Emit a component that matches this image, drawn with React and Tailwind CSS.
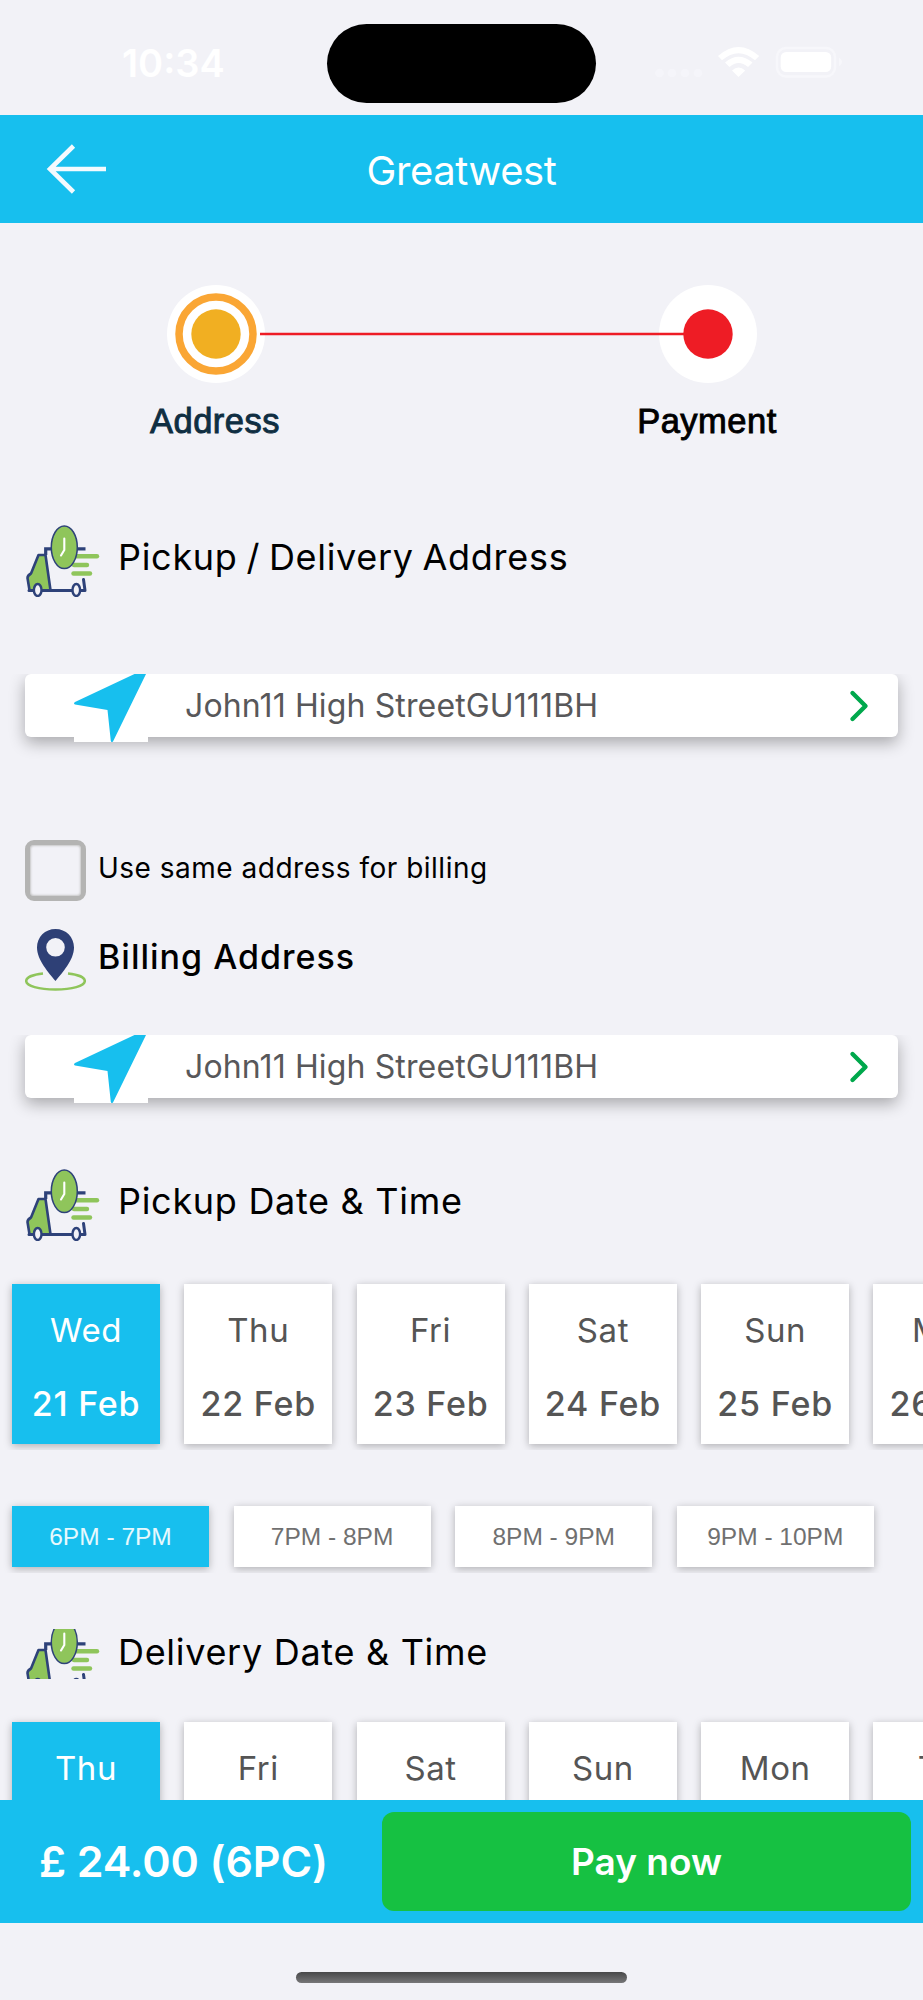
const pickupDays = [
  { day: 'Wed', date: '21 Feb' },
  { day: 'Thu', date: '22 Feb' },
  { day: 'Fri', date: '23 Feb' },
  { day: 'Sat', date: '24 Feb' },
  { day: 'Sun', date: '25 Feb' },
  { day: 'Mon', date: '26 Feb' },
];

const deliveryDays = [
  { day: 'Thu' },
  { day: 'Fri' },
  { day: 'Sat' },
  { day: 'Sun' },
  { day: 'Mon' },
  { day: 'Tue' },
];

const slots = ['6PM - 7PM', '7PM - 8PM', '8PM - 9PM', '9PM - 10PM'];

const TruckIcon = ({ cropped }) => (
  <svg
    className={cropped ? 'w-[74px] h-[50px] shrink-0' : 'w-[74px] h-[72px] shrink-0'}
    viewBox={cropped ? '0 9 74 50' : '0 0 74 72'}
    fill="none"
  >
    <g stroke="#8fc55b" strokeWidth="4.4" strokeLinecap="round">
      <path d="M50 31.300H71" />
      <path d="M48 40H61" />
      <path d="M47.500 48.500H64" />
    </g>
    <path d="M27 23.800H19.700V30M51 23.800H59.500" stroke="#2e4279" strokeWidth="3.200" />
    <path d="M12.500 30h7L24.500 65.300H3.500L1.500 53q0-2.500 3.500-4.500Z" fill="#8fc55b" stroke="#2e4279" strokeWidth="2.600" strokeLinejoin="round" />
    <path d="M3 65.500H59L57.500 54.500" stroke="#2e4279" strokeWidth="3" strokeLinejoin="round" strokeLinecap="round" />
    <ellipse cx="11.700" cy="65" rx="3.800" ry="6" fill="#f2f2f7" stroke="#2e4279" strokeWidth="2.400" />
    <ellipse cx="50.300" cy="65" rx="3.800" ry="6" fill="#f2f2f7" stroke="#2e4279" strokeWidth="2.400" />
    <ellipse cx="38.300" cy="22.300" rx="13" ry="21.300" fill="#8fc55b" stroke="#2e4279" strokeWidth="1.500" />
    <path d="M38.300 13.500V25L35 30.500" stroke="#fff" strokeWidth="2.100" strokeLinecap="round" />
  </svg>
);

const PinIcon = () => (
  <svg className="w-[61px] h-[62px]" viewBox="0 0 61 62" fill="none">
    <path
      fillRule="evenodd"
      d="M30.500 0C20 0 12 8 12 18.500C12 31 24 44 30.500 52C37 44 49 31 49 18.500C49 8 41 0 30.500 0ZM30.500 9A9.300 9.300 0 1 1 30.500 27.600A9.300 9.300 0 1 1 30.500 9Z"
      fill="#2e4076"
    />
    <path d="M18 44.500C8 45.500 1.200 48.500 1.200 52C1.200 57 14 60.500 30.500 60.500S59.800 57 59.800 52C59.800 48.500 53 45.500 43 44.500" stroke="#8fc55b" strokeWidth="2.500" />
  </svg>
);

const Heading = ({ cropped, children, className = '' }) => (
  <div className={`flex items-center pl-[26px] ${cropped ? 'h-[50px]' : 'h-[72px]'}`}>
    <TruckIcon cropped={cropped} />
    <h2 className={`pl-[18px] text-[36px] leading-none tracking-[0.7px] text-black whitespace-nowrap ${cropped ? 'pb-[5px]' : 'pb-[8px]'} ${className}`}>
      {children}
    </h2>
  </div>
);

const AddressCard = () => (
  <div className="mx-[25px] h-[63px] bg-white rounded-md flex items-center shadow-[0_6px_16px_rgba(0,0,0,0.3)] [clip-path:inset(0_-24px_-30px_-24px)]">
    <svg className="ml-[49px] w-[74px] h-[68px] self-start shrink-0" viewBox="0 0 74 68">
      <path d="M0 0H74V68H0Z" fill="#fff" />
      <path d="M60.500 0H72L39 67.500Q37.500 69 36.800 67L33.500 36L1 30.500Q-1 29.500 1 28Z" fill="#17bfee" />
    </svg>
    <span className="ml-[37px] text-[32px] leading-none text-[#58585a] tracking-[0.13px]">John11 High StreetGU111BH</span>
    <svg className="ml-auto mr-[28px] w-[22px] h-[34px]" viewBox="0 0 22 34" fill="none">
      <path d="M4.500 4L17.500 17L4.500 30" stroke="#00a84c" strokeWidth="4.400" strokeLinecap="round" strokeLinejoin="round" />
    </svg>
  </div>
);

const DayRow = ({ days }) => (
  <div className="flex gap-[24.3px] pl-[12px] pt-[10px] h-[176px] overflow-hidden">
    {days.map((d, i) => (
      <div
        key={d.day}
        className={`w-[148px] h-[160px] shrink-0 flex flex-col items-center pt-[30px] gap-[42px] shadow-[0_2px_8px_rgba(0,0,0,0.28)] ${i === 0 ? 'bg-[#17bfee] text-white' : 'bg-white text-[#555]'}`}
      >
        <span className="text-[33px] leading-8 tracking-[0.6px]">{d.day}</span>
        {d.date && <span className="text-[34px] leading-8 tracking-[0.8px] font-medium whitespace-nowrap">{d.date}</span>}
      </div>
    ))}
  </div>
);

const StatusBar = () => (
  <div className="h-[115px] flex items-start text-white">
    <div className="w-[327px] pl-[122px] pt-[43px] text-[38px] leading-10 font-semibold">10:34</div>
    <div className="mt-6 w-[269px] h-[79px] rounded-full bg-black" />
    <svg className="ml-[54px] mt-[40px] w-[200px] h-[44px]" viewBox="650 40 200 44" fill="none">
      <g fill="#f5f5fa">
        <circle cx="659.500" cy="73" r="4.300" />
        <circle cx="672" cy="73" r="4.300" />
        <circle cx="685" cy="73" r="4.300" />
        <circle cx="698" cy="73" r="4.300" />
      </g>
      <path d="M718 56L722 60.300Q738.500 46 755 60.300L759.200 56Q738.500 38 718 56Z" fill="#fff" />
      <path d="M725 62.500L729.500 67Q738.500 59 748 67L752.500 62.500Q738.500 51 725 62.500Z" fill="#fff" />
      <path d="M732 70.500L738.500 77L745.200 70.500Q738.500 64.500 732 70.500Z" fill="#fff" />
      <rect x="777" y="48" width="58" height="28.500" rx="9" stroke="#f7f7fb" strokeWidth="2.500" />
      <rect x="780.700" y="52" width="50.500" height="20" rx="5.500" fill="#fff" />
      <path d="M839 57.500Q845 62 839 66.500Z" fill="#f7f7fb" />
    </svg>
  </div>
);

const Stepper = () => (
  <div className="pt-[62px]">
    <svg className="w-full h-[98px]" viewBox="0 0 923 98">
      <circle cx="216" cy="49" r="49" fill="#fff" />
      <circle cx="216" cy="49" r="37" fill="none" stroke="#faa634" strokeWidth="7.500" />
      <circle cx="216" cy="49" r="24.700" fill="#f1af22" />
      <circle cx="708" cy="49" r="49" fill="#fff" />
      <path d="M260 49H690" stroke="#ee1c25" strokeWidth="2.600" />
      <circle cx="708" cy="49" r="24.700" fill="#ee1c25" />
    </svg>
    <div className="flex justify-between pl-[130px] pr-[131px] pt-[20px] font-['Liberation_Sans',sans-serif] text-[34.5px] leading-9 tracking-[0.5px] [-webkit-text-stroke:0.9px]">
      <span className="w-[170px] text-center text-[#0f2e42]">Address</span>
      <span className="w-[170px] text-center text-black">Payment</span>
    </div>
  </div>
);

const App = () => {
  return (
    <div className="w-[923px] h-[2000px] overflow-hidden bg-[#f2f2f7] font-['Inter',sans-serif]">
      <StatusBar />
      <header className="h-[108px] bg-[#17bfee] grid grid-cols-[1fr_auto_1fr] items-center text-white">
        <svg className="ml-[46px] w-[62px] h-[54px]" viewBox="0 0 62 54" fill="none">
          <path d="M60 27H4M27.500 4L4 27L27.500 50" stroke="#f4fafe" strokeWidth="4.600" />
        </svg>
        <h1 className="pt-[3px] text-[40px] leading-none tracking-[-0.4px]">Greatwest</h1>
      </header>

      <main className="h-[1577px] overflow-hidden">
        <Stepper />

        <div className="pt-[86px]">
          <Heading className="[word-spacing:-2px]">Pickup / Delivery Address</Heading>
        </div>
        <div className="pt-[77px]">
          <AddressCard />
        </div>

        <label className="flex pt-[103px] pl-[25px]">
          <span className="w-[61px] h-[61px] border-[5px] border-[#b4b4b3] rounded-[9px] shadow-[inset_0_0_2px_1px_#c8c8c8]" />
          <span className="pl-[12px] pt-[14px] text-[28px] leading-7 tracking-[0.5px]">Use same address for billing</span>
        </label>
        <div className="flex pt-[28px] pl-[25px]">
          <PinIcon />
          <h2 className="pl-[12px] pt-[12px] text-[34px] leading-8 font-medium tracking-[1px] text-black">Billing Address</h2>
        </div>
        <div className="pt-[44px]">
          <AddressCard />
        </div>

        <div className="pt-[71px]">
          <Heading>Pickup Date &amp; Time</Heading>
        </div>
        <div className="pt-[33px]">
          <DayRow days={pickupDays} />
        </div>
        <div className="mt-[46px] flex gap-[24.600px] pl-[12px] pt-[10px] h-[77px] overflow-hidden font-['Liberation_Sans',sans-serif]">
          {slots.map((slot, i) => (
            <div
              key={slot}
              className={`w-[197px] h-[61px] pt-[2px] flex items-center justify-center text-[24.500px] shadow-[0_2px_8px_rgba(0,0,0,0.28)] ${i === 0 ? 'bg-[#17bfee] text-white/90' : 'bg-white text-[#707070]'}`}
            >
              {slot}
            </div>
          ))}
        </div>

        <div className="pt-[56px]">
          <Heading cropped>Delivery Date &amp; Time</Heading>
        </div>
        <div className="pt-[33px]">
          <DayRow days={deliveryDays} />
        </div>
      </main>

      <footer className="h-[123px] bg-[#17bfee] flex items-center text-white">
        <span className="w-[382px] pl-[39px] text-[43px] font-semibold tracking-[-0.1px] whitespace-nowrap">£ 24.00 (6PC)</span>
        <button className="w-[529px] h-[99px] rounded-xl bg-[#16c142] text-[37px] font-semibold">Pay now</button>
      </footer>
      <div className="pt-[49px] flex justify-center">
        <div className="w-[331px] h-[11px] rounded-full bg-linear-to-b from-[#484849] to-[#777779]" />
      </div>
    </div>
  );
};

export default App;
